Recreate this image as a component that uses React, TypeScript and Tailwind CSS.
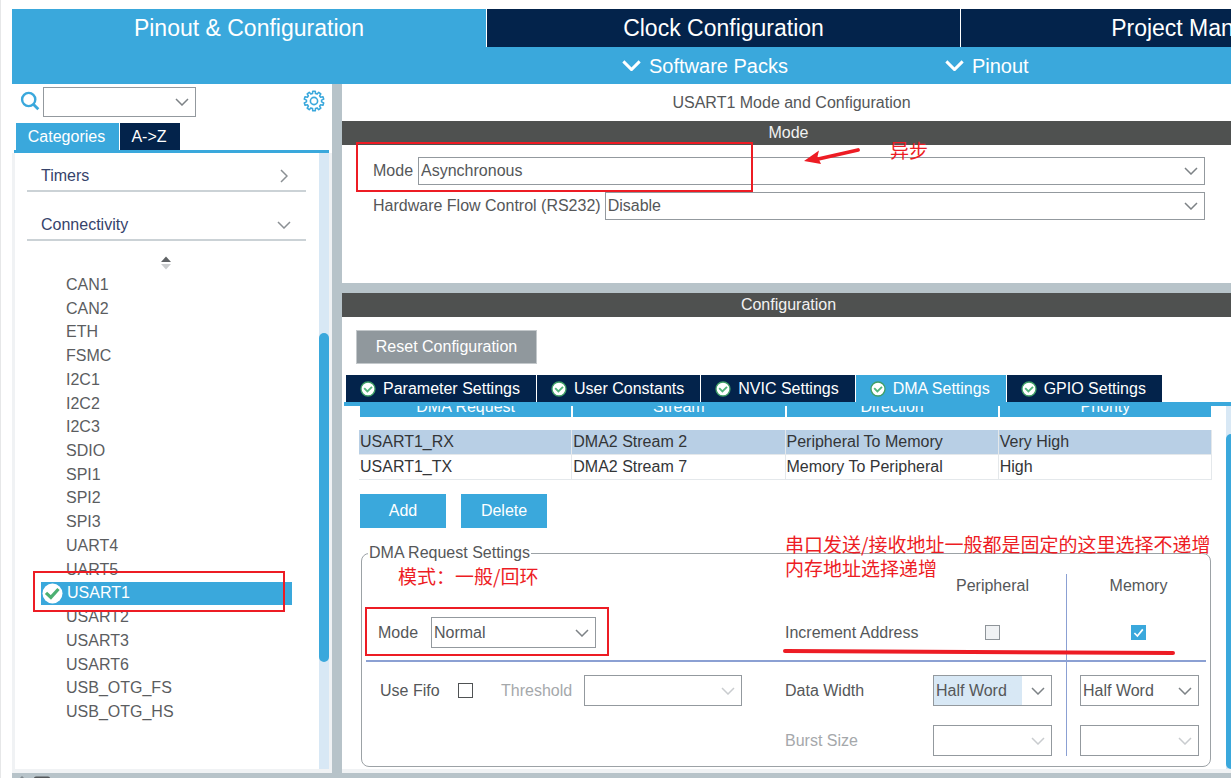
import React from "react";

const peripherals = [
  "CAN1", "CAN2", "ETH", "FSMC", "I2C1", "I2C2", "I2C3", "SDIO", "SPI1", "SPI2",
  "SPI3", "UART4", "UART5", "USART1", "USART2", "USART3", "USART6", "USB_OTG_FS", "USB_OTG_HS",
];

const configTabs = ["Parameter Settings", "User Constants", "NVIC Settings", "DMA Settings", "GPIO Settings"];

const dmaRows = [
  ["USART1_RX", "DMA2 Stream 2", "Peripheral To Memory", "Very High"],
  ["USART1_TX", "DMA2 Stream 7", "Memory To Peripheral", "High"],
];

const TEETH = 10;
const gearOutline = Array.from({ length: TEETH * 4 }, (_, i) => {
  const step = (Math.PI * 2) / TEETH;
  const offsets = [-0.32, -0.2, 0.2, 0.32];
  const angle = (Math.floor(i / 4) + offsets[i % 4]) * step;
  const radius = i % 4 === 0 || i % 4 === 3 ? 7.6 : 9.9;
  return `${(11 + radius * Math.sin(angle)).toFixed(2)},${(11 - radius * Math.cos(angle)).toFixed(2)}`;
}).join(" ");

function Chevron({ className, width = 1.5 }: { className: string; width?: number }) {
  return (
    <svg viewBox="0 0 14 8" className={className} fill="none" stroke="currentColor" strokeWidth={width}>
      <path d="M1 1l6 6 6-6" />
    </svg>
  );
}

type ComboProps = {
  id?: string;
  label?: string;
  value?: string;
  className: string;
  disabled?: boolean;
  highlighted?: boolean;
};

function Combo({ id, label, value = "", className, disabled, highlighted }: ComboProps) {
  return (
    <div className={`relative border border-[#93999e] bg-white ${className}`}>
      <select
        id={id}
        aria-label={label}
        disabled={disabled}
        defaultValue={value}
        className={`block h-full w-full appearance-none pl-[2px] text-base leading-5 text-[#555759] outline-none ${
          highlighted ? "bg-linear-to-r from-[#d8e8f5] from-75% to-white to-75%" : "bg-white"
        }`}
      >
        <option value={value}>{value}</option>
      </select>
      <span className="pointer-events-none absolute inset-y-0 right-[6px] flex items-center">
        <Chevron className={`h-2 w-[14px] ${disabled ? "text-[#c9cccf]" : "text-[#7d8286]"}`} />
      </span>
    </div>
  );
}

function TabCheck() {
  return (
    <svg viewBox="0 0 16 16" className="size-4" fill="none">
      <circle cx="8" cy="8" r="7" fill="#fff" stroke="#3f9f66" strokeWidth="1.3" />
      <path d="M4.2 7.2l3.2 3.2 4.6-4.6" stroke="#52b57a" strokeWidth="1.9" />
    </svg>
  );
}

function Sidebar() {
  return (
    <aside className="flex w-[320px] shrink-0 flex-col bg-white">
      <div className="flex h-[39px] items-start pt-[3px] pl-2">
        <svg viewBox="0 0 20 20" className="mt-1 size-5" fill="none" stroke="#3aa8dc" strokeWidth="2.4">
          <circle cx="8.7" cy="8.5" r="6.6" />
          <path d="M13.3 13.3l5 5" strokeWidth="2.8" />
        </svg>
        <Combo label="Search" className="ml-[3px] h-[30px] w-[153px]" />
        <button aria-label="Options" className="mt-[3px] mr-[7px] ml-auto text-[#3aa8dc]">
          <svg viewBox="0 0 22 22" className="size-[22px]" fill="none" stroke="currentColor" strokeWidth="1.6" strokeLinejoin="round">
            <polygon points={gearOutline} />
            <circle cx="11" cy="11" r="3.6" />
          </svg>
        </button>
      </div>
      <div className="flex h-[27px] gap-px pl-1">
        <button className="w-[103px] bg-[#3aa8dc] pr-[2px] text-white">Categories</button>
        <button className="w-[60px] bg-[#03234b] pr-[2px] text-white">A-&gt;Z</button>
      </div>
      <div className="mr-[3px] ml-[2px] h-[3px] bg-[#3aa8dc]" />
      <div className="flex border-x-[3px] border-b-4 border-[#f0f2f4]">
        <div className="flex-1 pr-[13px] pl-3">
          <button className="flex h-[39px] w-full items-center justify-between border-b-2 border-[#cbd2d6] pt-2 pr-[15px] pl-[14px] text-[#36436b]">
            Timers
            <Chevron className="h-2 w-[14px] -rotate-90 text-[#8b9094]" />
          </button>
          <button className="flex h-[49px] w-full items-center justify-between border-b-2 border-[#cbd2d6] pt-[18px] pr-[15px] pl-[14px] text-[#36436b]">
            Connectivity
            <Chevron className="h-2 w-[14px] text-[#8b9094]" />
          </button>
          <div className="flex h-8 items-center justify-center pt-[11px] pr-[2px]">
            <svg viewBox="0 0 12 14" className="h-[14px] w-3">
              <path d="M1 6l5-5.5L11 6z" fill="#5f6265" />
              <path d="M1 8l5 5.5L11 8z" fill="#cbcdcf" />
            </svg>
          </div>
          <ul className="grid h-[451px] auto-rows-fr pr-[14px] pl-[14px]">
            {peripherals.map((name) =>
              name === "USART1" ? (
                <li key={name} className="flex items-center gap-1 bg-[#3aa8dc] pl-px text-white">
                  <svg viewBox="0 0 21 21" className="size-[21px]">
                    <circle cx="10.5" cy="10.5" r="10" fill="#fff" />
                    <path d="M4 9.8l4.9 4.6 7.6-8.4" fill="none" stroke="#4cb072" strokeWidth="3.2" />
                  </svg>
                  {name}
                </li>
              ) : (
                <li key={name} className="flex items-center pl-[25px] text-[#5b5d5f]">{name}</li>
              )
            )}
          </ul>
        </div>
        <div className="flex h-[616px] w-[10px] flex-col bg-[#d8e8f5] pt-[180px]">
          <div className="h-[329px] rounded-full bg-[#3aa8dc]" />
        </div>
      </div>
    </aside>
  );
}

function SectionBar({ children }: { children: React.ReactNode }) {
  return <h2 className="h-6 bg-[#4f5150] pl-1 text-center leading-6 text-[#f2f2f2]">{children}</h2>;
}

function DmaSettings() {
  return (
    <fieldset className="mr-px ml-[2px] h-[226px] min-w-0 rounded-lg border border-[#9ca2a6] px-1">
      <legend className="ml-[2px] px-px leading-6">DMA Request Settings</legend>
      <div className="grid grid-cols-[1fr_281px_140px] pt-[9px]">
        <div className="flex items-center border-b-2 border-[#8ba0d3] pt-[31px] pl-3">
          <label htmlFor="dma-mode" className="w-[53px]">Mode</label>
          <Combo id="dma-mode" value="Normal" className="h-[31px] w-[165px]" />
        </div>
        <div className="border-b-2 border-[#8ba0d3] pb-3">
          <div className="h-6 pl-[171px] leading-6">Peripheral</div>
          <div className="mt-[19px] flex h-[31px] items-center">
            <span className="w-[200px]">Increment Address</span>
            <input
              type="checkbox"
              aria-label="Increment Address, Peripheral"
              disabled
              className="size-[15px] appearance-none border border-[#8e9499] bg-[#f0f2f4]"
            />
          </div>
        </div>
        <div className="border-b-2 border-l border-[#8ba0d3] pb-3">
          <div className="h-6 pl-1 text-center leading-6">Memory</div>
          <div className="mt-[19px] flex h-[31px] items-center justify-center pl-1">
            <span className="relative flex size-[15px]">
              <input
                type="checkbox"
                aria-label="Increment Address, Memory"
                defaultChecked
                className="size-[15px] appearance-none bg-[#3aa8dc]"
              />
              <svg viewBox="0 0 15 15" className="pointer-events-none absolute inset-0" fill="none" stroke="#fff" strokeWidth="1.7">
                <path d="M3.4 8l3 3 5.4-6.6" />
              </svg>
            </span>
          </div>
        </div>
        <div className="flex h-[44px] items-center pt-[13px] pl-[14px]">
          <label htmlFor="fifo" className="w-[78px]">Use Fifo</label>
          <input id="fifo" type="checkbox" className="size-[15px] appearance-none border border-[#4f5254] bg-white" />
          <label htmlFor="threshold" className="ml-7 w-[83px] text-[#a5a8ab]">Threshold</label>
          <Combo id="threshold" disabled className="h-[31px] w-[158px]" />
        </div>
        <div className="flex flex-col gap-[19px] pt-[13px]">
          <div className="flex items-center">
            <label htmlFor="periph-width" className="w-[148px]">Data Width</label>
            <Combo id="periph-width" value="Half Word" highlighted className="h-[31px] w-[119px]" />
          </div>
          <div className="flex items-center">
            <label htmlFor="periph-burst" className="w-[148px] text-[#a5a8ab]">Burst Size</label>
            <Combo id="periph-burst" disabled className="h-[31px] w-[119px]" />
          </div>
        </div>
        <div className="flex flex-col gap-[19px] border-l border-[#8ba0d3] pt-[13px] pl-[13px]">
          <Combo label="Data Width, Memory" value="Half Word" className="h-[31px] w-[119px]" />
          <Combo label="Burst Size, Memory" disabled className="h-[31px] w-[119px]" />
        </div>
      </div>
    </fieldset>
  );
}

function Notes() {
  return (
    <div className="pointer-events-none absolute inset-y-0 right-0 -left-px font-['Noto_Sans_CJK_SC',sans-serif] text-[19px] leading-6 text-[#ed1c24]">
      <div className="absolute top-[142px] left-[356px] h-[50px] w-[397px] border-2 border-[#ed1c24]" />
      <div className="absolute top-[571px] left-[33px] h-[41px] w-[252px] border-2 border-[#ed1c24]" />
      <div className="absolute top-[607px] left-[365px] h-[49px] w-[244px] border-2 border-[#ed1c24]" />
      <svg viewBox="0 0 56 20" className="absolute top-[147px] left-[804px] h-5 w-14">
        <path d="M12 12.5L54 3" stroke="#ed1c24" strokeWidth="3.8" strokeLinecap="round" />
        <path d="M0 14L15 3.5l-1.5 6L17 17z" fill="#ed1c24" />
      </svg>
      <svg viewBox="0 0 394 8" className="absolute top-[648px] left-[782px] h-2 w-[394px]">
        <path d="M3 3l388 2" stroke="#ed1c24" strokeWidth="4" strokeLinecap="round" />
      </svg>
      <span className="absolute top-[138px] left-[890px]">异步</span>
      <span className="absolute top-[564px] left-[398px] whitespace-nowrap">模式：一般/回环</span>
      <p className="absolute top-[532px] left-[785px] whitespace-nowrap">
        串口发送/接收地址一般都是固定的这里选择不递增
        <br />
        内存地址选择递增
      </p>
    </div>
  );
}

export default function App() {
  return (
    <div className="relative min-h-screen overflow-hidden border-l border-[#e6e7e8] bg-white pt-[9px] pl-[11px] font-['Liberation_Sans',Arial,sans-serif] text-base leading-5 text-[#555759]">
      <header className="bg-[#3aa8dc]">
        <nav className="flex h-[38px] text-[23px] text-white">
          <button className="w-[474px] shrink-0 bg-[#3aa8dc]">Pinout &amp; Configuration</button>
          <button className="w-[474px] shrink-0 border-l border-white bg-[#03234b]">Clock Configuration</button>
          <button className="w-[474px] shrink-0 border-l border-white bg-[#03234b] pr-1">Project Manager</button>
        </nav>
        <div className="flex h-[37px] items-center gap-[157px] pl-[610px] text-xl text-white">
          <button className="flex items-center gap-2">
            <Chevron className="h-[11px] w-[19px]" width={2.2} />
            Software Packs
          </button>
          <button className="flex items-center gap-2">
            <Chevron className="h-[11px] w-[19px]" width={2.2} />
            Pinout
          </button>
        </div>
      </header>

      <div className="flex">
        <Sidebar />
        <main className="min-w-0 flex-1 border-l-[10px] border-[#b7c3c9] bg-white">
          <h1 className="h-[37px] pl-[10px] text-center leading-[37px]">USART1 Mode and Configuration</h1>
          <SectionBar>Mode</SectionBar>
          <div className="flex h-[138px] flex-col gap-[7px] pt-3 pr-[26px] pl-[31px]">
            <div className="flex items-center gap-[5px]">
              <label htmlFor="mode">Mode</label>
              <Combo id="mode" value="Asynchronous" className="h-7 flex-1" />
            </div>
            <div className="flex items-center gap-1">
              <label htmlFor="flow">Hardware Flow Control (RS232)</label>
              <Combo id="flow" value="Disable" className="h-7 flex-1" />
            </div>
          </div>
          <div className="h-[10px] bg-[#b7c3c9]" />
          <SectionBar>Configuration</SectionBar>
          <div className="pt-[13px] pl-[14px]">
            <button className="block h-[34px] w-[181px] border border-[#c3c8cb] bg-[#90989d] text-white">Reset Configuration</button>
          </div>
          <div className="flex gap-px pt-[11px] pl-1 text-white">
            {configTabs.map((tab) => (
              <button
                key={tab}
                className={`flex h-[27px] items-center gap-[7px] pr-4 pl-[14px] ${
                  tab === "DMA Settings" ? "bg-[#3aa8dc]" : "bg-[#03234b]"
                }`}
              >
                <TabCheck />
                {tab}
              </button>
            ))}
          </div>
          <div className="ml-[2px] h-1 bg-[#3aa8dc]" />
          <div className="flex h-[367px] overflow-hidden border-b-4 border-[#f0f2f4]">
            <div className="min-w-0 flex-1 pr-[14px] pl-[17px]">
              <table className="-mt-[11px] w-full table-fixed border-separate border-spacing-0 text-[#333537]">
                <thead>
                  <tr>
                    {["DMA Request", "Stream", "Direction", "Priority"].map((h) => (
                      <th key={h} className="px-px pb-[13px] font-normal text-white">
                        <div className="h-[22px] bg-[#3aa8dc] leading-6">{h}</div>
                      </th>
                    ))}
                  </tr>
                </thead>
                <tbody>
                  {dmaRows.map((row, i) => (
                    <tr key={row[0]} className={i === 0 ? "bg-[#b8cfe5]" : "bg-white"}>
                      {row.map((cell) => (
                        <td key={cell} className="h-[25px] border-r border-b border-[#e4e8eb] pl-px leading-5">{cell}</td>
                      ))}
                    </tr>
                  ))}
                </tbody>
              </table>
              <div className="flex gap-[15px] pt-[14px] pb-[13px] pl-px text-white">
                <button className="h-[34px] w-[86px] bg-[#3aa8dc]">Add</button>
                <button className="h-[34px] w-[86px] bg-[#3aa8dc]">Delete</button>
              </div>
              <DmaSettings />
            </div>
            <div className="w-[5px] bg-[#d8e8f5] pt-7">
              <div className="h-[335px] rounded-l-md bg-[#3aa8dc]" />
            </div>
          </div>
        </main>
      </div>
      <footer className="h-[5px] bg-[#b7c3c9]">
        <svg viewBox="0 0 40 5" className="h-[5px] w-10">
          <path d="M8 5l2-2 2 2z" fill="#7f888d" />
          <path d="M22 5q0-1.5 2-1.5h12q2 0 2 1.5z" fill="#55595c" />
        </svg>
      </footer>
      <Notes />
    </div>
  );
}
